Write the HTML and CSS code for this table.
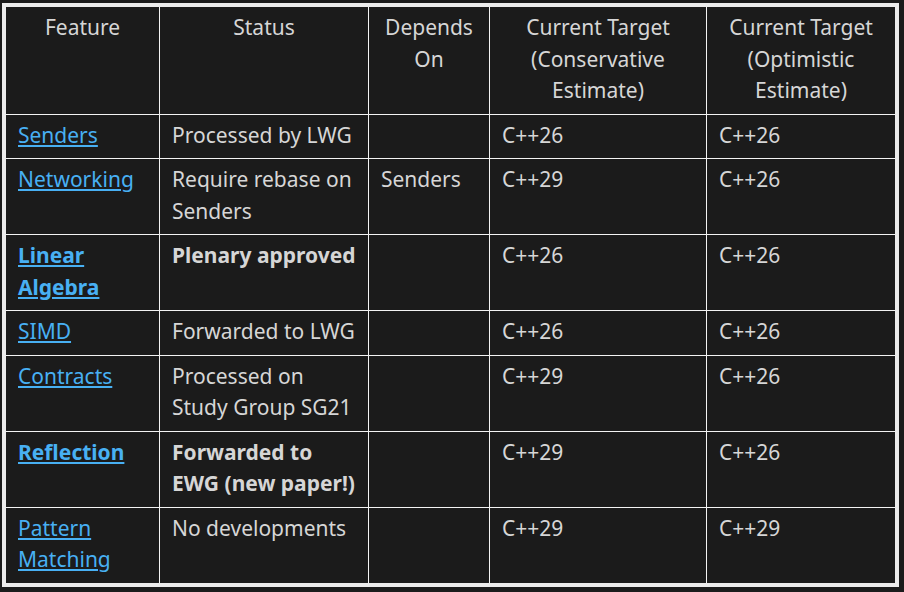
FILE: index.html
```html
<!DOCTYPE html>
<html>
<head>
<meta charset="utf-8">
<link rel="stylesheet" href="styles.css">
</head>
<body>
<table class="roadmap">
  <colgroup>
    <col class="c1"><col class="c2"><col class="c3"><col class="c4"><col class="c5">
  </colgroup>
  <thead>
    <tr>
      <th>Feature</th>
      <th>Status</th>
      <th>Depends On</th>
      <th>Current Target (Conservative Estimate)</th>
      <th>Current Target (Optimistic Estimate)</th>
    </tr>
  </thead>
  <tbody>
    <tr>
      <td><a href="#">Senders</a></td>
      <td>Processed by LWG</td>
      <td></td>
      <td>C++26</td>
      <td>C++26</td>
    </tr>
    <tr>
      <td><a href="#">Networking</a></td>
      <td>Require rebase on Senders</td>
      <td>Senders</td>
      <td>C++29</td>
      <td>C++26</td>
    </tr>
    <tr>
      <td><strong><a href="#">Linear Algebra</a></strong></td>
      <td><strong>Plenary approved</strong></td>
      <td></td>
      <td>C++26</td>
      <td>C++26</td>
    </tr>
    <tr>
      <td><a href="#">SIMD</a></td>
      <td>Forwarded to LWG</td>
      <td></td>
      <td>C++26</td>
      <td>C++26</td>
    </tr>
    <tr>
      <td><a href="#">Contracts</a></td>
      <td>Processed on Study Group SG21</td>
      <td></td>
      <td>C++29</td>
      <td>C++26</td>
    </tr>
    <tr>
      <td><strong><a href="#">Reflection</a></strong></td>
      <td><strong>Forwarded to EWG (new paper!)</strong></td>
      <td></td>
      <td>C++29</td>
      <td>C++26</td>
    </tr>
    <tr>
      <td><a href="#">Pattern Matching</a></td>
      <td>No developments</td>
      <td></td>
      <td>C++29</td>
      <td>C++29</td>
    </tr>
  </tbody>
</table>
</body>
</html>
```

FILE: styles.css
```css
html, body {
  background: #1b1b1b;
}
body {
  margin: 3px 0 0 2px;
  font-family: "Noto Sans", "Open Sans", sans-serif;
  font-size: 21px;
  line-height: 1.5;
  color: #d6d6d6;
}
.roadmap {
  border-collapse: separate;
  border-spacing: 0;
  border: 4px solid #ececec;
  table-layout: fixed;
  width: 897px;
  background: #1b1b1b;
}
.c1 { width: 153px; }
.c2 { width: 209px; }
.c3 { width: 121px; }
.c4 { width: 217px; }
.c5 { width: 189px; }
.roadmap th,
.roadmap td {
  padding: 5px 12px 7px;
  vertical-align: top;
  text-align: left;
  border-left: 1px solid #f4f4f4;
  border-top: 1px solid #f4f4f4;
}
.roadmap th {
  font-weight: normal;
  text-align: center;
  border-top: none;
}
.roadmap th:first-child,
.roadmap td:first-child {
  border-left: none;
}
.roadmap a {
  color: #48b0f3;
  text-decoration: underline;
  text-underline-offset: 2px;
}
.roadmap strong {
  font-weight: bold;
}
```
